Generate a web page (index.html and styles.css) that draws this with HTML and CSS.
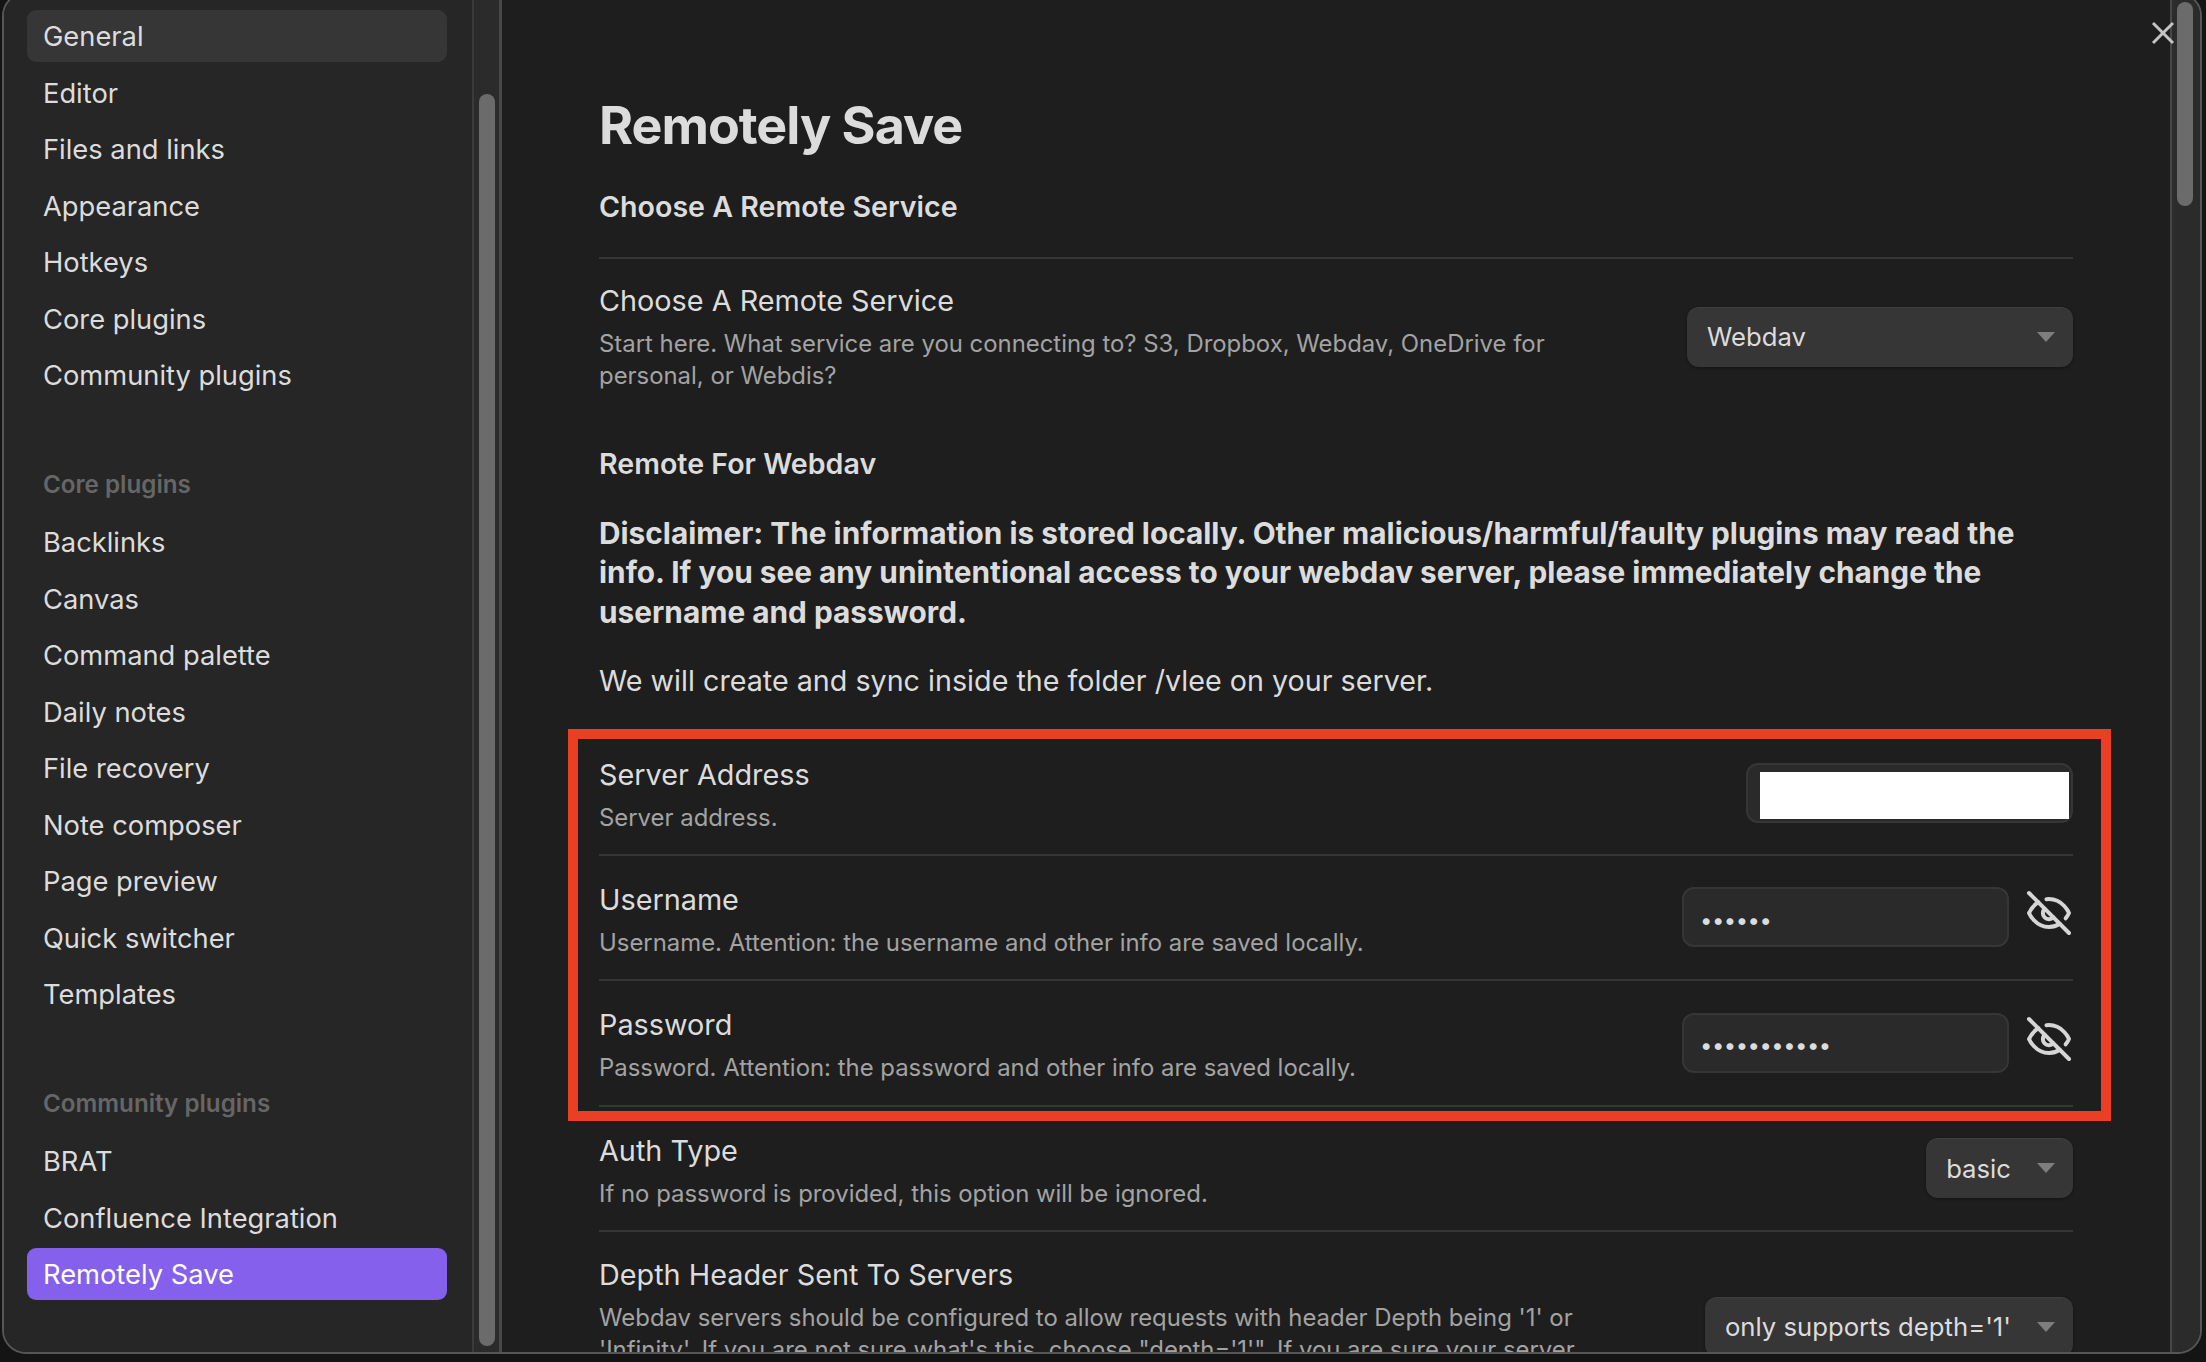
FILE: index.html
```html
<!DOCTYPE html>
<html lang="en">
<head>
  <meta charset="UTF-8" />
  <title>Remotely Save settings</title>
  <link rel="stylesheet" href="styles.css">
</head>
<body>
  <div class="window">
    <nav class="sidebar">
      <div class="nav-item is-hover">General</div>
      <div class="nav-item">Editor</div>
      <div class="nav-item">Files and links</div>
      <div class="nav-item">Appearance</div>
      <div class="nav-item">Hotkeys</div>
      <div class="nav-item">Core plugins</div>
      <div class="nav-item">Community plugins</div>

      <div class="nav-heading">Core plugins</div>
      <div class="nav-item">Backlinks</div>
      <div class="nav-item">Canvas</div>
      <div class="nav-item">Command palette</div>
      <div class="nav-item">Daily notes</div>
      <div class="nav-item">File recovery</div>
      <div class="nav-item">Note composer</div>
      <div class="nav-item">Page preview</div>
      <div class="nav-item">Quick switcher</div>
      <div class="nav-item">Templates</div>

      <div class="nav-heading">Community plugins</div>
      <div class="nav-item">BRAT</div>
      <div class="nav-item">Confluence Integration</div>
      <div class="nav-item is-active">Remotely Save</div>
    </nav>
    <div class="gutter gutter-side"><div class="thumb"></div></div>

    <main class="content">
      <h1>Remotely Save</h1>
      <h2 class="first-heading">Choose A Remote Service</h2>

      <div class="setting tall">
        <div class="info">
          <div class="name">Choose A Remote Service</div>
          <div class="desc">Start here. What service are you connecting to? S3, Dropbox, Webdav, OneDrive for personal, or Webdis?</div>
        </div>
        <div class="dropdown dropdown-service">Webdav<span class="arrow"></span></div>
      </div>

      <h2 class="webdav-heading">Remote For Webdav</h2>
      <p class="disclaimer">Disclaimer: The information is stored locally. Other malicious/harmful/faulty plugins may read the info. If you see any unintentional access to your webdav server, please immediately change the username and password.</p>
      <p class="note">We will create and sync inside the folder /vlee on your server.</p>

      <div class="setting no-line">
        <div class="info">
          <div class="name">Server Address</div>
          <div class="desc">Server address.</div>
        </div>
        <div class="text-input address-input"><div class="redacted"></div></div>
      </div>

      <div class="setting">
        <div class="info">
          <div class="name">Username</div>
          <div class="desc">Username. Attention: the username and other info are saved locally.</div>
        </div>
        <div class="text-input secret-input"><span class="dots">••••••</span></div>
        <svg class="eye" viewBox="0 0 24 24"><path d="M9.88 9.88a3 3 0 1 0 4.24 4.24"/><path d="M10.73 5.08A10.43 10.43 0 0 1 12 5c7 0 10 7 10 7a13.16 13.16 0 0 1-1.67 2.68"/><path d="M6.61 6.61A13.526 13.526 0 0 0 2 12s3 7 10 7a9.74 9.74 0 0 0 5.39-1.61"/><line x1="2" y1="2" x2="22" y2="22"/></svg>
      </div>

      <div class="setting">
        <div class="info">
          <div class="name">Password</div>
          <div class="desc">Password. Attention: the password and other info are saved locally.</div>
        </div>
        <div class="text-input secret-input"><span class="dots">•••••••••••</span></div>
        <svg class="eye" viewBox="0 0 24 24"><path d="M9.88 9.88a3 3 0 1 0 4.24 4.24"/><path d="M10.73 5.08A10.43 10.43 0 0 1 12 5c7 0 10 7 10 7a13.16 13.16 0 0 1-1.67 2.68"/><path d="M6.61 6.61A13.526 13.526 0 0 0 2 12s3 7 10 7a9.74 9.74 0 0 0 5.39-1.61"/><line x1="2" y1="2" x2="22" y2="22"/></svg>
      </div>

      <div class="setting">
        <div class="info">
          <div class="name">Auth Type</div>
          <div class="desc">If no password is provided, this option will be ignored.</div>
        </div>
        <div class="dropdown">basic<span class="arrow"></span></div>
      </div>

      <div class="setting tall">
        <div class="info">
          <div class="name">Depth Header Sent To Servers</div>
          <div class="desc">Webdav servers should be configured to allow requests with header Depth being '1' or 'Infinity'. If you are not sure what's this, choose "depth='1'". If you are sure your server supports depth='infinity', please choose that option.</div>
        </div>
        <div class="dropdown">only supports depth='1'<span class="arrow"></span></div>
      </div>
    </main>
    <div class="gutter gutter-main"><div class="thumb"></div></div>

    <button class="close" aria-label="Close">
      <svg viewBox="0 0 24 24"><line x1="2" y1="2" x2="22" y2="22"/><line x1="22" y1="2" x2="2" y2="22"/></svg>
    </button>
    <div class="highlight"></div>
  </div>
</body>
</html>
```

FILE: styles.css
```css
* {
  box-sizing: border-box;
}
html, body {
  height: 100%;
  overflow: hidden;
}
body {
  margin: 0;
  background-color: #141414;
  font-family: 'Inter', 'Liberation Sans', sans-serif;
  color: #dcdcdc;
}
.window {
  position: relative;
  display: flex;
  width: 2200px;
  height: 1362px;
  margin: -8px 0 0 2px;
  border: 2px solid #565656;
  border-radius: 24px;
  overflow: hidden;
  background-color: #1e1e1e;
}

/* left nav */
.sidebar {
  flex: none;
  width: 468px;
  padding: 16px 25px 0 23px;
  background-color: #262626;
}
.nav-item {
  height: 52px;
  margin-bottom: 4.5px;
  padding-left: 16px;
  border-radius: 9px;
  font-size: 27.3px;
  line-height: 54px;
  color: #dcdcdc;
}
.nav-item.is-hover {
  background-color: #363636;
}
.nav-item.is-active {
  background-color: #8460ec;
  color: #ffffff;
}
.nav-heading {
  height: 34px;
  margin: 67px 0 14px 0;
  padding-left: 16px;
  font-size: 24.2px;
  font-weight: 600;
  line-height: 34px;
  color: #666666;
}

/* scroll gutters */
.gutter {
  flex: none;
  background-color: #2b2b2b;
  border-left: 2px solid #3b3b3b;
}
.gutter-side {
  width: 30px;
  padding: 100px 5px 0 5px;
  border-right: 3px solid #484848;
}
.gutter-main {
  width: 30px;
  padding: 8px 5px 0 5px;
  border-left-color: #484848;
}
.thumb {
  width: 16px;
  border-radius: 8px;
  background-color: #6b6b6b;
}
.gutter-side .thumb {
  height: 1252px;
}
.gutter-main .thumb {
  height: 204px;
}

/* settings pane */
.content {
  flex: 1;
  min-width: 0;
  padding: 0 97px 0 97px;
  overflow: hidden;
}
h1 {
  margin: 101px 0 0 0;
  font-size: 52px;
  font-weight: 700;
  letter-spacing: -1px;
  line-height: 62px;
  color: #dcdcdc;
}
h2 {
  margin: 0;
  font-size: 28.6px;
  font-weight: 600;
  line-height: 40px;
  color: #dcdcdc;
}
.first-heading {
  margin-top: 30px;
  padding-bottom: 30px;
}
.webdav-heading {
  margin-top: 30px;
}
.disclaimer {
  margin: 30px 0 0 0;
  font-size: 29.8px;
  font-weight: 700;
  line-height: 39.4px;
}
.note {
  margin: 29px 0 27px 0;
  font-size: 28.7px;
  line-height: 40px;
}
.setting {
  display: flex;
  align-items: center;
  min-height: 125.5px;
  padding: 19px 0;
  border-top: 2px solid #363636;
}
.setting.no-line {
  border-top: none;
}
.setting.no-line .info {
  margin-top: 7px;
}
.setting.tall {
  padding: 22px 0;
}
.setting.tall:last-child {
  padding-top: 23px;
}
.info {
  flex: 1;
  min-width: 0;
  margin-top: 4px;
}
.setting.tall .info {
  margin-top: 0;
}
.name {
  font-size: 28.8px;
  line-height: 40px;
  color: #dcdcdc;
}
.desc {
  max-width: 985px;
  margin-top: 7px;
  font-size: 23.9px;
  line-height: 32px;
  color: #a3a3a3;
}

/* controls */
.dropdown {
  flex: none;
  display: flex;
  align-items: center;
  height: 60px;
  padding: 0 18px 0 20px;
  border-radius: 12px;
  background-color: #363636;
  box-shadow: 0 1px 3px rgba(0, 0, 0, 0.4), inset 0 1px 0 rgba(255, 255, 255, 0.05);
  font-size: 25.7px;
  color: #dcdcdc;
}
.dropdown-service {
  width: 386px;
}
.arrow {
  width: 0;
  height: 0;
  margin-left: auto;
  border-top: 10px solid #7e7e7e;
  border-left: 9px solid transparent;
  border-right: 9px solid transparent;
}
.dropdown:not(.dropdown-service) .arrow {
  margin-left: 26px;
}
.text-input {
  flex: none;
  height: 60px;
  border: 2px solid #363636;
  border-radius: 12px;
  background-color: #2a2a2a;
}
.address-input {
  width: 327px;
  margin-top: 5px;
  padding: 7px 2px 2px 12px;
}
.redacted {
  height: 47px;
  background-color: #ffffff;
}
.secret-input {
  display: flex;
  align-items: center;
  width: 327px;
  padding-left: 16px;
}
.dots {
  margin-top: 5px;
  font-size: 22px;
  letter-spacing: -0.5px;
  color: #dcdcdc;
}
.eye {
  flex: none;
  width: 48px;
  height: 48px;
  margin: -8px 0 0 16px;
  fill: none;
  stroke: #d6d6d6;
  stroke-width: 2;
  stroke-linecap: round;
  stroke-linejoin: round;
}

/* overlays */
.close {
  position: absolute;
  top: 27px;
  right: 25px;
  width: 24px;
  height: 24px;
  padding: 0;
  border: none;
  background: none;
}
.close svg {
  display: block;
  fill: none;
  stroke: #c4c4c4;
  stroke-width: 3;
}
.highlight {
  position: absolute;
  top: 735px;
  left: 564px;
  width: 1543px;
  height: 392px;
  border: 10px solid #ea3f25;
}
```
